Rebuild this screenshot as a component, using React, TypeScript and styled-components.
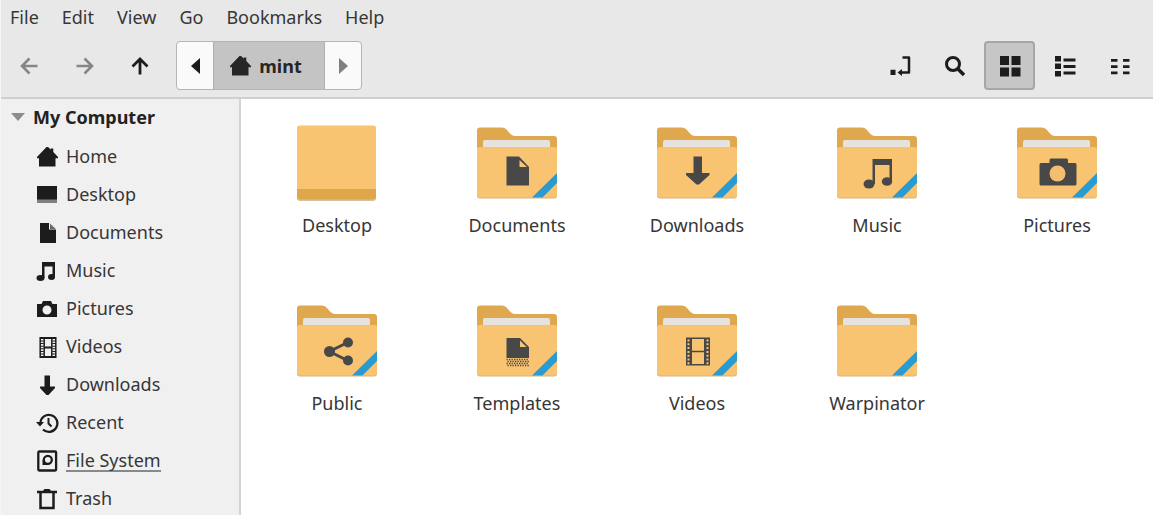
import React from 'react';
import styled, { createGlobalStyle } from 'styled-components';

const GlobalStyle = createGlobalStyle`
  *, *::before, *::after { box-sizing: border-box; }
  body { margin: 0; background: #fff; }
  button { font: inherit; color: inherit; background: none; border: 0; padding: 0; margin: 0; }
`;

const Window = styled.div`
  display: flex;
  flex-direction: column;
  height: 100vh;
  overflow: hidden;
  border-left: 1px solid #f6f6f6;
  font-family: 'Noto Sans', 'Open Sans', sans-serif;
  font-size: 18px;
  line-height: 24px;
  color: #363636;
`;

const MenuBar = styled.nav`
  display: flex;
  flex: none;
  gap: 23px;
  height: 33px;
  padding: 0 9px;
  align-items: center;
  background: #e8e8e8;
`;

const MenuButton = styled.button`
  line-height: 24px;
`;

const Toolbar = styled.div`
  display: flex;
  flex: none;
  align-items: center;
  gap: 4px;
  padding: 8px 8px 7px 3px;
  background: #e8e8e8;
  border-bottom: 2px solid #cfcfcf;
`;

const ToolButton = styled.button<{ $active?: boolean }>`
  display: flex;
  align-items: center;
  justify-content: center;
  width: 51px;
  height: 49px;
  color: #1c1c1c;
  border: 2px solid ${(p) => (p.$active ? '#a6a6a6' : 'transparent')};
  border-radius: 4px;
  background: ${(p) => (p.$active ? '#c6c6c6' : 'transparent')};

  &:disabled { color: #868686; }
`;

const PathBar = styled.div`
  display: flex;
  height: 49px;
  margin: 0 auto 0 7px;
  border: 1px solid #b4b4b4;
  border-radius: 4px;
  overflow: hidden;
  background: #fafafa;
`;

const PathArrow = styled.button`
  display: flex;
  align-items: center;
  justify-content: center;
  width: 36px;
  color: #1c1c1c;

  &:disabled { color: #808080; }
`;

const PathSegment = styled.button`
  display: flex;
  align-items: center;
  justify-content: center;
  gap: 9px;
  width: 112px;
  padding-right: 6px;
  font-weight: 700;
  color: #262626;
  background: #c4c4c4;
  border: solid #b0b0b0;
  border-width: 0 1px;
`;

const Body = styled.div`
  display: flex;
  flex: 1;
  min-height: 0;
`;

const Sidebar = styled.aside`
  flex: none;
  width: 240px;
  overflow: hidden;
  background: #f1f0f0;
  border-right: 2px solid #d3d3d3;
`;

const SectionButton = styled.button`
  display: flex;
  align-items: center;
  gap: 8px;
  width: 100%;
  height: 36px;
  padding-left: 10px;
  font-weight: 700;
  color: #222;
`;

const PlaceList = styled.ul`
  margin: 0;
  padding: 3px 0 0;
  list-style: none;
`;

const PlaceLink = styled.a`
  display: flex;
  align-items: center;
  gap: 9px;
  height: 38px;
  padding-left: 36px;
  color: inherit;
  text-decoration: none;

  svg { color: #1c1c1c; }
`;

const PlaceName = styled.span<{ $underlined?: boolean }>`
  line-height: 20px;
  border: solid ${(p) => (p.$underlined ? '#858a8e' : 'transparent')};
  border-width: 0 0 2px;
`;

const Files = styled.main`
  display: grid;
  flex: 1;
  grid-template-columns: repeat(auto-fill, 180px);
  align-content: start;
  row-gap: 64px;
  padding: 24px 0 0 6px;
  overflow: hidden;
  background: #fff;
`;

const FileItem = styled.a`
  display: flex;
  flex-direction: column;
  align-items: center;
  gap: 10px;
  color: inherit;
  text-decoration: none;
`;

type GlyphName =
  | 'home' | 'desktop' | 'document' | 'music' | 'camera' | 'film'
  | 'download' | 'recent' | 'disk' | 'trash'
  | 'back' | 'forward' | 'up' | 'location' | 'search' | 'grid' | 'list' | 'compact';

const stroke = { fill: 'none', stroke: 'currentColor' } as const;

const glyphs: Record<GlyphName, React.ReactNode> = {
  home: <path d="M9.500 0h1.500l2.800 2.600V1.500h2.500V5l4.700 5v1.200H18.500V19.500H2V11.200H0V10z" />,
  desktop: (
    <>
      <path d="M0 1h20v14H0z" />
      <path d="M0 14.500h20V18H0z" fill="#808080" />
    </>
  ),
  document: (
    <>
      <path d="M3 0h9v6.500h7V20H3z" />
      <path d="M13 0.500L18.800 6H13z" fill="#6a6a6a" />
    </>
  ),
  music: (
    <>
      <path d="M5 1h13v15h-2.500V5.500h-8V17H5z" />
      <ellipse cx="3.500" cy="17" rx="4" ry="3" />
      <ellipse cx="14.500" cy="16" rx="3.500" ry="3" />
    </>
  ),
  camera: (
    <path
      fillRule="evenodd"
      d="M6 2h8l1.500 3H20v13H0V5h4.500zM10 6.500a4.500 4.500 0 1 0 0 9a4.500 4.500 0 1 0 0-9z"
    />
  ),
  film: (
    <>
      <path {...stroke} strokeWidth="1.500" d="M3.200 0v21M18.800 0v21M7.200 0v21M14.800 0v21" />
      <path {...stroke} strokeWidth="2" d="M3 1h16M7 10.500h8M3 20h16" />
      <path {...stroke} strokeWidth="3" strokeDasharray="1 1.600" d="M5.200 3.500v16M16.800 3.500v16" />
    </>
  ),
  download: <path d="M7.500 0.500h5.500v11h5v1.500L11.500 20h-2L3 13v-1.500h4.500z" />,
  recent: (
    <>
      <path {...stroke} strokeWidth="2.200" d="M3.400 10A8.500 8.500 0 1 1 6 16.500" />
      <path {...stroke} strokeWidth="2" d="M11.500 5v5.500l3 3" />
      <path d="M-1 9h8l-4 4.500z" />
    </>
  ),
  disk: (
    <>
      <rect {...stroke} strokeWidth="2.300" x="1.300" y="0.500" width="17.800" height="19" rx="1" />
      <circle {...stroke} strokeWidth="2.300" cx="10.800" cy="8.800" r="4" />
      <path d="M5.500 9h2.500v3.500h3V14H5.500z" />
    </>
  ),
  trash: (
    <>
      <path {...stroke} strokeWidth="2.500" d="M3.500 3.500v15.500h13V3.500" />
      <path d="M0 1.800h6L7.500 0h5L14 1.800h6v2.500H0z" />
    </>
  ),
  back: <path {...stroke} strokeWidth="2.600" d="M17.500 10H2.500M9.500 2.500L2 10l7.500 7.500" />,
  forward: <path {...stroke} strokeWidth="2.600" d="M1.500 10h15M9.500 2.500L17 10l-7.500 7.500" />,
  up: <path {...stroke} strokeWidth="2.800" d="M10 18.500v-15M2.500 10.500L10 3l7.500 7.500" />,
  location: (
    <>
      <path {...stroke} strokeWidth="2.500" strokeLinejoin="round" d="M12.500 1.500H19V16.500h-8" />
      <path d="M0.500 13.800h5V19h-5zM7.500 16.500l4.500-3.500v7z" />
    </>
  ),
  search: (
    <>
      <circle {...stroke} strokeWidth="3" cx="8" cy="8" r="6.500" />
      <path {...stroke} strokeWidth="3.500" d="M12.500 12.500l6.500 6.500" />
    </>
  ),
  grid: <path d="M0 0h9v9H0zM11.500 0h9v9h-9zM0 11.500h9v9H0zM11.500 11.500h9v9h-9z" />,
  list: (
    <path d="M0 0h6v5.500H0zM0 7.500h6V13H0zM0 15h6v5.500H0zM8.500 2.500h12v3h-12zM8.500 9h12v3h-12zM8.500 15.500h12v3h-12z" />
  ),
  compact: (
    <path d="M1 3h6.500v2.800H1zM13 3h6.500v2.800H13zM1 9.200h6.500V12H1zM13 9.200h6.500V12H13zM1 15.400h6.500v2.800H1zM13 15.400h6.500v2.800H13z" />
  ),
};

const GlyphSvg = styled.svg`
  display: block;
  flex: none;
  overflow: visible;
`;

const Glyph = ({ name }: { name: GlyphName }) => (
  <GlyphSvg width="20" height="20" viewBox="0 0 20 20" fill="currentColor" aria-hidden="true">
    {glyphs[name]}
  </GlyphSvg>
);

const Triangle = ({ points, width, height }: { points: string; width: number; height: number }) => (
  <GlyphSvg width={width} height={height} fill="currentColor" aria-hidden="true">
    <polygon points={points} />
  </GlyphSvg>
);

type Emblem = 'document' | 'download' | 'music' | 'camera' | 'share' | 'template' | 'film' | 'none';

const ink = '#484848';

const emblems: Record<Emblem, React.ReactNode> = {
  none: null,
  document: (
    <>
      <path d="M29.500 33.500H42L52 44V62.500H29.500z" fill={ink} />
      <path d="M42.500 37v7H50z" fill="#f8c471" />
    </>
  ),
  download: <path d="M36.500 33.500H45V50h7.500v2L42 61.500h-2.500L29 52v-2h7.500z" fill={ink} />,
  music: (
    <>
      <path d="M35.500 36h19.500v22h-2.500V42H38v19h-2.500z" fill={ink} />
      <ellipse cx="32" cy="61" rx="5.500" ry="4.500" fill={ink} />
      <ellipse cx="50" cy="58.500" rx="5.200" ry="4.300" fill={ink} />
    </>
  ),
  camera: (
    <>
      <path
        d="M24 40h8.500v-3q0-1.500 1.500-1.500h15.500q1.500 0 1.500 1.500v3h7q1.500 0 1.500 1.500V61q0 1.500-1.500 1.500H24q-1.500 0-1.500-1.500V41.500q0-1.500 1.500-1.500z"
        fill={ink}
      />
      <circle cx="40.500" cy="50.500" r="8" fill="#f3bf6e" />
    </>
  ),
  share: (
    <>
      <path d="M50.500 41.500L32.500 50.500l18 9" fill="none" stroke={ink} strokeWidth="3" />
      <circle cx="32.500" cy="50.500" r="5.500" fill={ink} />
      <circle cx="51" cy="41.500" r="5" fill={ink} />
      <circle cx="51" cy="59.500" r="5" fill={ink} />
    </>
  ),
  template: (
    <>
      <path d="M29.500 37H43l9 9v11H29.500z" fill={ink} />
      <path d="M43 39.500V46h6.500z" fill="#f8c471" />
      <path
        d="M29.500 58.500H52M30.500 60.500H52M29.500 62.500H52M30.500 64.500H52"
        fill="none"
        stroke={ink}
        strokeWidth="1.500"
        strokeDasharray="1.300 1.200"
      />
    </>
  ),
  film: (
    <>
      <path d="M29 36.500h6v28h-6zM47 36.500h6v28h-6z" fill={ink} />
      <path d="M35 37.200h12M35 50.500h12M35 63.800h12" fill="none" stroke={ink} strokeWidth="1.600" />
      <path d="M31.500 38.500v25M50.500 38.500v25" fill="none" stroke="#f8c471" strokeWidth="2" strokeDasharray="2 1.800" />
    </>
  ),
};

const FolderIcon = ({ emblem }: { emblem: Emblem }) => (
  <GlyphSvg width="80" height="80" viewBox="0 0 80 80" aria-hidden="true">
    <path d="M0 30V7.500q0-3 3-3h22q2.500 0 4.500 2l4 4.500q2 2 4.500 2h39q3 0 3 3V30z" fill="#dfa84f" />
    <path d="M6 28V19q0-2 2-2h63q2 0 2 2v9z" fill="#e6e3de" />
    <path d="M0 27q0-3 3-3h74q3 0 3 3v45.500q0 3-3 3H3q-3 0-3-3z" fill="#d9b47c" />
    <path d="M0 27q0-3 3-3h74q3 0 3 3v44.500q0 3-3 3H3q-3 0-3-3z" fill="#f8c471" />
    <path d="M80 50v10L65.500 74.500H55z" fill="#2a9bd0" />
    {emblems[emblem]}
  </GlyphSvg>
);

const DesktopIcon = () => (
  <GlyphSvg width="80" height="80" viewBox="0 0 80 80" aria-hidden="true">
    <rect x="0" y="4" width="79" height="74" rx="3" fill="#d3c3a8" />
    <rect x="0" y="3" width="79" height="73.500" rx="3" fill="#dfa64c" />
    <path d="M0 66V5.500q0-3 3-3h73q3 0 3 3V66z" fill="#f8c471" />
  </GlyphSvg>
);

const menus = ['File', 'Edit', 'View', 'Go', 'Bookmarks', 'Help'];

const places: { name: string; glyph: GlyphName; underlined?: boolean }[] = [
  { name: 'Home', glyph: 'home' },
  { name: 'Desktop', glyph: 'desktop' },
  { name: 'Documents', glyph: 'document' },
  { name: 'Music', glyph: 'music' },
  { name: 'Pictures', glyph: 'camera' },
  { name: 'Videos', glyph: 'film' },
  { name: 'Downloads', glyph: 'download' },
  { name: 'Recent', glyph: 'recent' },
  { name: 'File System', glyph: 'disk', underlined: true },
  { name: 'Trash', glyph: 'trash' },
];

const files: { name: string; emblem?: Emblem }[] = [
  { name: 'Desktop' },
  { name: 'Documents', emblem: 'document' },
  { name: 'Downloads', emblem: 'download' },
  { name: 'Music', emblem: 'music' },
  { name: 'Pictures', emblem: 'camera' },
  { name: 'Public', emblem: 'share' },
  { name: 'Templates', emblem: 'template' },
  { name: 'Videos', emblem: 'film' },
  { name: 'Warpinator', emblem: 'none' },
];

export default function App() {
  return (
    <Window>
      <GlobalStyle />
      <MenuBar aria-label="Menu">
        {menus.map((m) => (
          <MenuButton key={m} type="button">{m}</MenuButton>
        ))}
      </MenuBar>
      <Toolbar>
        <ToolButton type="button" aria-label="Back" disabled><Glyph name="back" /></ToolButton>
        <ToolButton type="button" aria-label="Forward" disabled><Glyph name="forward" /></ToolButton>
        <ToolButton type="button" aria-label="Up"><Glyph name="up" /></ToolButton>
        <PathBar>
          <PathArrow type="button" aria-label="Scroll path left">
            <Triangle points="9,0 9,16 0,8" width={9} height={16} />
          </PathArrow>
          <PathSegment type="button">
            <Glyph name="home" />
            mint
          </PathSegment>
          <PathArrow type="button" aria-label="Scroll path right" disabled>
            <Triangle points="0,0 9,8 0,16" width={9} height={16} />
          </PathArrow>
        </PathBar>
        <ToolButton type="button" aria-label="Toggle location entry"><Glyph name="location" /></ToolButton>
        <ToolButton type="button" aria-label="Search"><Glyph name="search" /></ToolButton>
        <ToolButton type="button" aria-label="Icon view" aria-pressed="true" $active><Glyph name="grid" /></ToolButton>
        <ToolButton type="button" aria-label="List view"><Glyph name="list" /></ToolButton>
        <ToolButton type="button" aria-label="Compact view"><Glyph name="compact" /></ToolButton>
      </Toolbar>
      <Body>
        <Sidebar>
          <SectionButton type="button" aria-expanded="true">
            <GlyphSvg width="14" height="8" fill="#8c8c8c" aria-hidden="true">
              <polygon points="0,0 14,0 7,8" />
            </GlyphSvg>
            My Computer
          </SectionButton>
          <PlaceList>
            {places.map((p) => (
              <li key={p.name}>
                <PlaceLink href="#">
                  <Glyph name={p.glyph} />
                  <PlaceName $underlined={p.underlined}>{p.name}</PlaceName>
                </PlaceLink>
              </li>
            ))}
          </PlaceList>
        </Sidebar>
        <Files>
          {files.map((f) => (
            <FileItem key={f.name} href="#">
              {f.emblem ? <FolderIcon emblem={f.emblem} /> : <DesktopIcon />}
              <span>{f.name}</span>
            </FileItem>
          ))}
        </Files>
      </Body>
    </Window>
  );
}
